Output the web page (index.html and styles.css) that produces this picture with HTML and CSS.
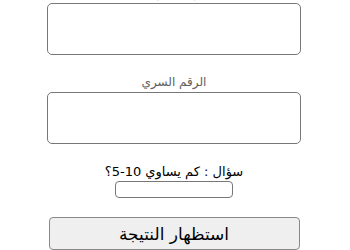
FILE: index.html
```html
<!DOCTYPE html>
<html lang="ar" dir="rtl">
<head>
<meta charset="utf-8">
<title>تسجيل الدخول</title>
<link rel="stylesheet" href="styles.css">
</head>
<body>
<form class="form">
  <label class="label">رقم الهوية</label>
  <input class="field" type="text">
  <label class="label label-gap">الرقم السري</label>
  <input class="field" type="password">
  <div class="question">سؤال : كم يساوي 10-5؟</div>
  <input class="answer" type="text">
  <button class="submit" type="button">استظهار النتيجة</button>
</form>
</body>
</html>
```
FILE: styles.css
```css
html, body {
  margin: 0;
  padding: 0;
  background: #ffffff;
}
body {
  font-family: "DejaVu Sans", sans-serif;
  overflow: hidden;
}
.form {
  display: flex;
  flex-direction: column;
  align-items: center;
  width: 254px;
  margin: -14px auto 0 47px;
}
.label {
  font-size: 12px;
  line-height: 15px;
  height: 15px;
  color: #5e5e5e;
  margin-bottom: 2px;
}
.label-gap {
  margin-top: 20px;
}
.field {
  box-sizing: border-box;
  width: 254px;
  height: 52px;
  border: 1px solid #777777;
  border-radius: 5px;
  background: #ffffff;
  margin: 0;
  padding: 0;
}
.question {
  margin-top: 19px;
  font-size: 13px;
  line-height: 17px;
  color: #000000;
}
.answer {
  box-sizing: border-box;
  width: 118px;
  height: 17px;
  margin: 1px 0 0 0;
  padding: 0;
  border: 1px solid #777777;
  border-radius: 4px;
  background: #ffffff;
}
.submit {
  box-sizing: border-box;
  width: 251px;
  height: 33px;
  margin-top: 19px;
  padding: 0;
  border: 1px solid #888888;
  border-radius: 4px;
  background: #efefef;
  font-family: "DejaVu Sans", sans-serif;
  font-size: 17px;
  color: #000000;
}
```
